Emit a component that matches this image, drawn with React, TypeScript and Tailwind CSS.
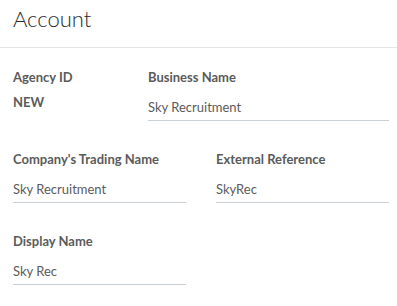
import React from "react";

const font = { fontFamily: "Lato, 'Open Sans', sans-serif" };

function Field({ label, value, className }: { label: string; value: string; className?: string }) {
  return (
    <div className={className}>
      <div className="h-[20px] text-[13px] leading-[20px] font-bold text-[#5b5b5b]">{label}</div>
      <div className="mt-[10px] h-[24px] border-b border-[#c9d0d6] text-[13px] leading-[20px] text-[#5b5b5b]">{value}</div>
    </div>
  );
}

export default function App() {
  return (
    <div className="w-[397px] h-[306px] bg-white" style={font}>
      <div className="h-[48px] border-b border-[#e6e6e6] pl-[13px] pt-[5px]">
        <div className="text-[22px] leading-[28px] font-light text-[#2b2b2b]">Account</div>
      </div>
      <div className="pl-[13px] pr-[8px] pt-[19px]">
        <div className="flex gap-[30px]">
          <div className="w-[105px]">
            <div className="h-[20px] text-[13px] leading-[20px] font-bold text-[#5b5b5b]">Agency ID</div>
            <div className="mt-[5px] text-[13px] leading-[20px] font-bold text-[#5b5b5b]">NEW</div>
          </div>
          <Field label="Business Name" value="Sky Recruitment" className="w-[241px]" />
        </div>
        <div className="mt-[28px] flex gap-[30px]">
          <Field label="Company's Trading Name" value="Sky Recruitment" className="w-[173px]" />
          <Field label="External Reference" value="SkyRec" className="w-[173px]" />
        </div>
        <div className="mt-[28px] flex gap-[30px]">
          <Field label="Display Name" value="Sky Rec" className="w-[173px]" />
        </div>
      </div>
    </div>
  );
}
